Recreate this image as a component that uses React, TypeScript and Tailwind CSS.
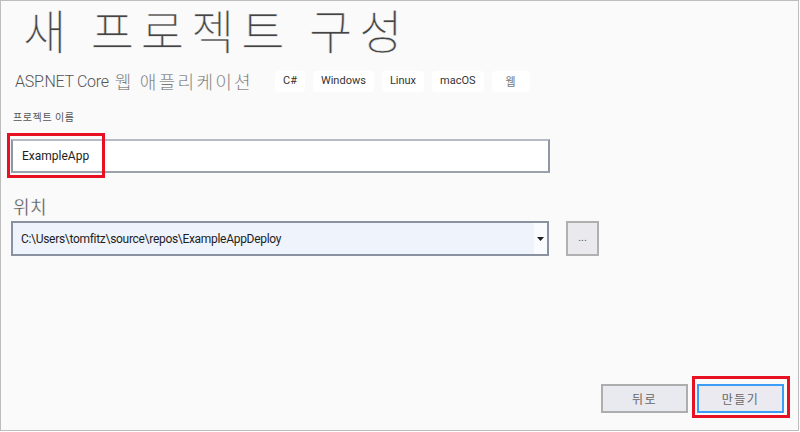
import React from "react";

const cjk = "font-['Noto_Sans_CJK_KR',sans-serif]";
const ui = "font-['Roboto','Noto_Sans_CJK_KR',sans-serif]";

function Tag({ children }: { children: React.ReactNode }) {
  return (
    <div className={`h-[21px] px-[8px] flex items-center bg-white rounded-[4px] text-[11px] text-[#333] ${ui}`}>
      {children}
    </div>
  );
}

export default function App() {
  return (
    <div className="w-[799px] h-[431px] border border-[#bdbdbd] bg-[#fafafa] flex flex-col pl-[10px] pb-[17px]">
      <h1
        className={`ml-[12px] mt-[-6px] h-[68px] text-[47px] leading-[68px] tracking-[7px] text-[#444] font-light whitespace-nowrap ${cjk} [-webkit-text-stroke:0.5px_#fafafa] [paint-order:fill_stroke]`}
      >
        새 프로젝트 구성
      </h1>

      <div className="mt-[8px] ml-[4px] flex items-center h-[21px]">
        <div className="flex items-center text-[#555] w-[239px] whitespace-nowrap">
          <span className={`text-[16px] font-light tracking-[-0.3px] ${ui}`}>ASP.NET Core</span>
          <span className={`ml-[6px] text-[18px] font-light tracking-[2.3px] text-[#5a5a5a] ${cjk} [-webkit-text-stroke:0.2px_#fafafa] [paint-order:fill_stroke]`}>
            웹 애플리케이션
          </span>
        </div>
        <div className="ml-[21px] flex gap-[8px]">
          <Tag>C#</Tag>
          <Tag>Windows</Tag>
          <Tag>Linux</Tag>
          <Tag>macOS</Tag>
          <div className={`h-[21px] w-[38px] flex items-center justify-center bg-white rounded-[4px] text-[11px] text-[#777] ${cjk}`}>
            웹
          </div>
        </div>
      </div>

      <div className={`mt-[17px] ml-[2px] text-[10px] leading-[16px] tracking-[0.6px] text-[#555] ${cjk}`}>
        프로젝트 이름
      </div>

      <div className="relative mt-[14px] w-[539px] h-[34px]">
        <div className={`w-full h-full border-2 border-t-[#b4bbc7] border-l-[#8f97a5] border-r-[#8f97a5] border-b-[#9aa2ae] bg-white flex items-center pl-[9px] text-[12px] text-[#1e1e1e] ${ui}`}>
          ExampleApp
        </div>
        <div className="absolute left-[-4px] top-[-6px] w-[98px] h-[45px] border-[3px] border-[#e81123]" />
      </div>

      <div className={`mt-[21px] ml-[2px] text-[18px] leading-[24px] tracking-[0.5px] text-[#555] ${cjk} [-webkit-text-stroke:0.3px_#fafafa] [paint-order:fill_stroke]`}>
        위치
      </div>

      <div className="mt-[3px] flex items-center gap-[17px]">
        <div className="w-[538px] h-[35px] border-2 border-[#8a929f] bg-[#eef3fc] flex items-stretch">
          <div className={`flex-1 flex items-center pl-[8px] text-[12px] tracking-[-0.3px] text-[#1e1e1e] ${ui}`}>
            C:\Users\tomfitz\source\repos\ExampleAppDeploy
          </div>
          <div className="w-[13px] bg-[#f9fbfe] flex items-center justify-center">
            <svg width="7" height="4" viewBox="0 0 7 4">
              <path d="M0 0 H7 L3.5 4 Z" fill="#1e1e1e" />
            </svg>
          </div>
        </div>
        <div className={`w-[33px] h-[35px] border-2 border-[#b0b0b0] bg-[#e9e9ee] flex items-center justify-center text-[11px] text-[#555] ${ui}`}>
          ...
        </div>
      </div>

      <div className="flex-1" />

      <div className="flex justify-end items-center pr-[14px]">
        <div className={`w-[87px] h-[29px] border-2 border-[#adadad] bg-[#e9e9f0] flex items-center justify-center text-[12px] tracking-[1.5px] text-[#666] ${cjk}`}>
          뒤로
        </div>
        <div className="relative ml-[9px] w-[87px] h-[29px]">
          <div className={`w-full h-full border-2 border-[#3d9cf5] bg-[#eaeaf0] flex items-center justify-center text-[12px] tracking-[1.5px] text-[#666] ${cjk}`}>
            만들기
          </div>
          <div className="absolute left-[-5px] top-[-8px] w-[98px] h-[42px] border-[3px] border-[#e81123]" />
        </div>
      </div>
    </div>
  );
}
